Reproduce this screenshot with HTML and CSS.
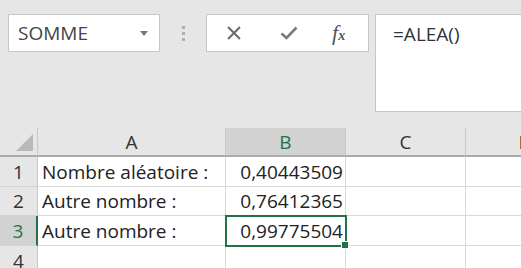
FILE: index.html
```html
<!DOCTYPE html>
<html lang="fr">
<head>
    <meta charset="UTF-8">
    <title>ALEA</title>
    <link rel="stylesheet" href="styles.css">
</head>
<body>

<div class="toolbar">
    <div class="name-box">
        <span>SOMME</span>
        <span class="caret"></span>
    </div>
    <div class="grip"><i></i><i></i><i></i></div>
    <div class="fx-buttons">
        <svg class="btn-x" width="16" height="14" viewBox="0 0 16 14"><path d="M2 1 L14 13 M14 1 L2 13" stroke="#6b6b6b" stroke-width="2" fill="none"/></svg>
        <svg class="btn-ok" width="18" height="14" viewBox="0 0 18 14"><path d="M1.5 7.5 L6.5 12 L16.5 1.5" stroke="#7a7a7a" stroke-width="2.6" fill="none"/></svg>
        <span class="btn-fx">f<small>x</small></span>
    </div>
    <div class="formula">=ALEA()</div>
</div>

<div class="sheet">
    <div class="hd corner"><span class="tri"></span></div>
    <div class="hd">A</div>
    <div class="hd active-col">B</div>
    <div class="hd">C</div>
    <div class="hd">D</div>

    <div class="hd rownum">1</div>
    <div class="cell">Nombre aléatoire :</div>
    <div class="cell num">0,40443509</div>
    <div class="cell"></div>
    <div class="cell"></div>

    <div class="hd rownum">2</div>
    <div class="cell">Autre nombre :</div>
    <div class="cell num">0,76412365</div>
    <div class="cell"></div>
    <div class="cell"></div>

    <div class="hd rownum active-row">3</div>
    <div class="cell">Autre nombre :</div>
    <div class="cell num selected">0,99775504</div>
    <div class="cell"></div>
    <div class="cell"></div>

    <div class="hd rownum">4</div>
    <div class="cell"></div>
    <div class="cell"></div>
    <div class="cell"></div>
    <div class="cell"></div>
</div>

</body>
</html>
```

FILE: styles.css
```css
body {
    margin: 0;
    width: 521px;
    height: 268px;
    overflow: hidden;
    background-color: #e6e6e6;
    font-family: "Open Sans", sans-serif;
}
.toolbar {
    display: flex;
    align-items: flex-start;
    height: 128px;
    padding: 14px 0 0 8px;
    box-sizing: border-box;
}
.name-box {
    width: 152px;
    height: 38px;
    box-sizing: border-box;
    border: 1px solid #c6c6c6;
    background-color: #fff;
    display: flex;
    align-items: center;
    justify-content: space-between;
    padding: 0 11px 0 9px;
    font-size: 19px;
    color: #444;
}
.caret {
    width: 0;
    height: 0;
    border-left: 4px solid transparent;
    border-right: 4px solid transparent;
    border-top: 5px solid #777;
}
.grip {
    width: 46px;
    height: 38px;
    display: flex;
    flex-direction: column;
    align-items: center;
    justify-content: center;
    gap: 3px;
}
.grip i {
    display: block;
    width: 3px;
    height: 3px;
    background-color: #b0b0b0;
}
.fx-buttons {
    width: 163px;
    height: 38px;
    box-sizing: border-box;
    border: 1px solid #c6c6c6;
    background-color: #fff;
    display: flex;
    align-items: center;
    padding-left: 19px;
}
.btn-ok {
    margin-left: 38px;
}
.btn-fx {
    margin-left: 34px;
    font-family: "Liberation Serif", serif;
    font-style: italic;
    font-size: 22px;
    color: #555;
}
.btn-fx small {
    font-size: 14px;
    font-weight: bold;
}
.formula {
    margin-left: 6px;
    flex: 1;
    height: 98px;
    box-sizing: border-box;
    border: 1px solid #c6c6c6;
    border-right: none;
    background-color: #fff;
    padding: 6px 0 0 17px;
    font-size: 19px;
    color: #333;
}
.sheet {
    display: grid;
    grid-template-columns: 38px 188px 120px 120px 120px;
    grid-template-rows: 29px 30px 29px 30px 30px;
    font-family: "Open Sans", sans-serif;
    font-size: 19px;
    color: #222;
    background-color: #fff;
}
.hd {
    background-color: #e6e6e6;
    border-right: 1px solid #c8c8c8;
    border-bottom: 1px solid #d4d4d4;
    box-sizing: border-box;
    display: flex;
    align-items: center;
    justify-content: center;
    color: #333;
}
.sheet > .hd:nth-child(-n+5) {
    border-bottom: 2px solid #ababab;
}
.corner {
    align-items: flex-end;
    justify-content: flex-end;
    padding: 0 4px 4px 0;
}
.tri {
    width: 0;
    height: 0;
    border-left: 17px solid transparent;
    border-bottom: 17px solid #b9b9b9;
}
.active-col {
    background-color: #d2d2d2;
    color: #217346;
}
.sheet > .active-col {
    border-bottom: 2px solid #217346;
}
.active-row {
    background-color: #d2d2d2;
    color: #217346;
    border-right: 2px solid #217346;
}
.cell {
    border-right: 1px solid #d9d9d9;
    border-bottom: 1px solid #d9d9d9;
    box-sizing: border-box;
    display: flex;
    align-items: center;
    padding: 0 4px;
    white-space: nowrap;
}
.num {
    justify-content: flex-end;
    padding-right: 2px;
}
.selected {
    position: relative;
    outline: 2px solid #217346;
    outline-offset: -1px;
}
.selected::after {
    content: "";
    position: absolute;
    right: -4px;
    bottom: -4px;
    width: 6px;
    height: 6px;
    background-color: #217346;
    border: 1px solid #fff;
}
```
